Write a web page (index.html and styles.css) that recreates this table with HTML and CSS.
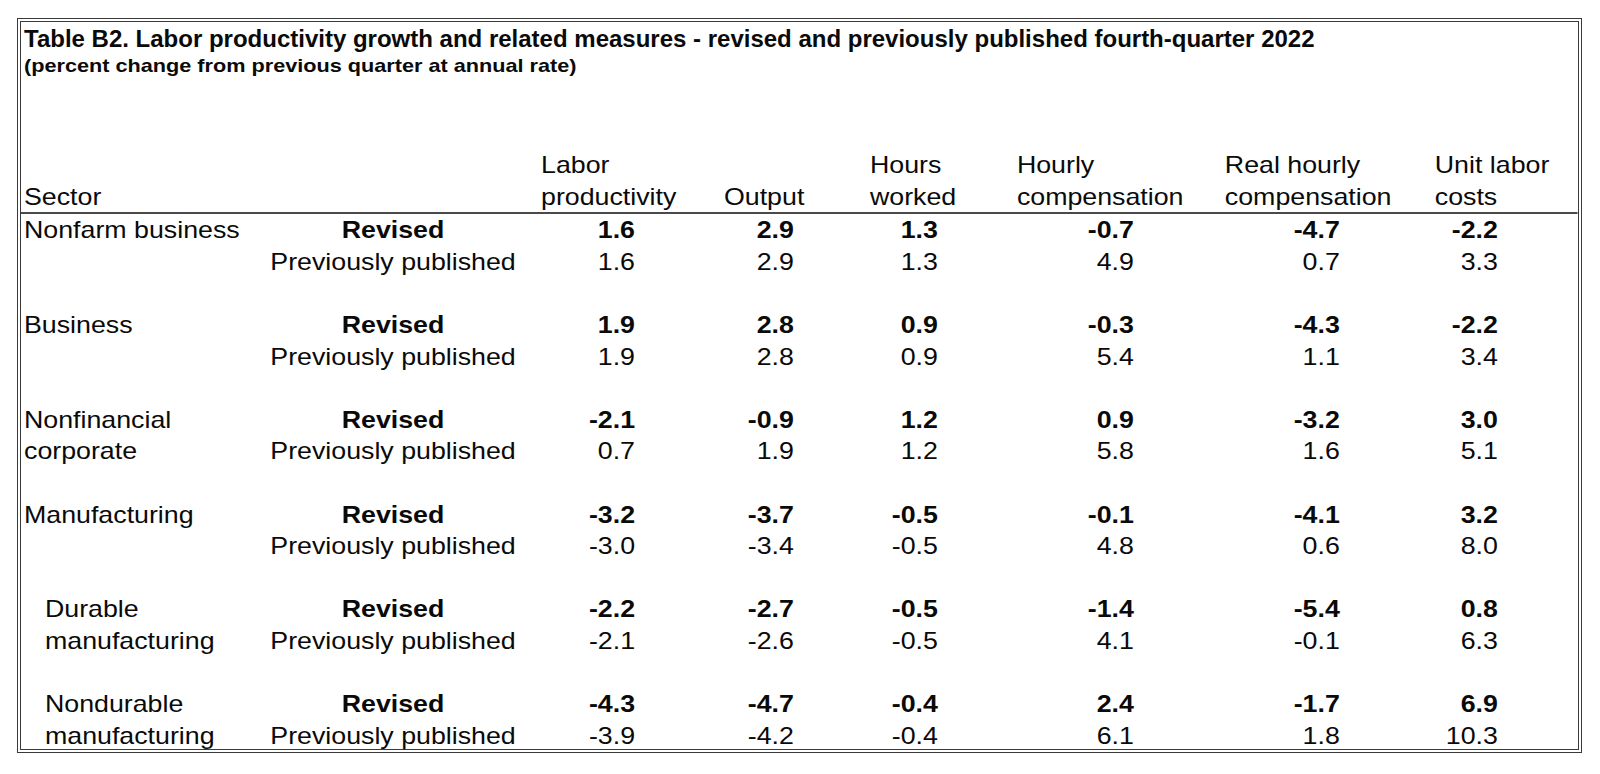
FILE: index.html
```html
<!DOCTYPE html>
<html lang="en">
<head>
<meta charset="utf-8">
<title>Table B2</title>
<link rel="stylesheet" href="styles.css">
</head>
<body>
<div class="frame">
  <div class="caption">
    <h1 class="title">Table B2. Labor productivity growth and related measures - revised and previously published fourth-quarter 2022</h1>
    <p class="subtitle"><span class="subtitle-text">(percent change from previous quarter at annual rate)</span></p>
  </div>
  <div class="sheet">
    <div class="row head">
      <div class="cell sector">Sector</div>
      <div class="cell kind"></div>
      <div class="cell h">Labor<br>productivity</div>
      <div class="cell h">Output</div>
      <div class="cell h">Hours<br>worked</div>
      <div class="cell h">Hourly<br>compensation</div>
      <div class="cell h">Real hourly<br>compensation</div>
      <div class="cell h">Unit labor<br>costs</div>
    </div>

    <div class="group">
      <div class="row rev">
        <div class="cell sector">Nonfarm business</div>
        <div class="cell kind">Revised</div>
        <div class="cell num">1.6</div><div class="cell num">2.9</div><div class="cell num">1.3</div><div class="cell num">-0.7</div><div class="cell num">-4.7</div><div class="cell num">-2.2</div>
      </div>
      <div class="row">
        <div class="cell sector"></div>
        <div class="cell kind">Previously published</div>
        <div class="cell num">1.6</div><div class="cell num">2.9</div><div class="cell num">1.3</div><div class="cell num">4.9</div><div class="cell num">0.7</div><div class="cell num">3.3</div>
      </div>
    </div>

    <div class="group">
      <div class="row rev">
        <div class="cell sector">Business</div>
        <div class="cell kind">Revised</div>
        <div class="cell num">1.9</div><div class="cell num">2.8</div><div class="cell num">0.9</div><div class="cell num">-0.3</div><div class="cell num">-4.3</div><div class="cell num">-2.2</div>
      </div>
      <div class="row">
        <div class="cell sector"></div>
        <div class="cell kind">Previously published</div>
        <div class="cell num">1.9</div><div class="cell num">2.8</div><div class="cell num">0.9</div><div class="cell num">5.4</div><div class="cell num">1.1</div><div class="cell num">3.4</div>
      </div>
    </div>

    <div class="group">
      <div class="row rev">
        <div class="cell sector">Nonfinancial</div>
        <div class="cell kind">Revised</div>
        <div class="cell num">-2.1</div><div class="cell num">-0.9</div><div class="cell num">1.2</div><div class="cell num">0.9</div><div class="cell num">-3.2</div><div class="cell num">3.0</div>
      </div>
      <div class="row">
        <div class="cell sector">corporate</div>
        <div class="cell kind">Previously published</div>
        <div class="cell num">0.7</div><div class="cell num">1.9</div><div class="cell num">1.2</div><div class="cell num">5.8</div><div class="cell num">1.6</div><div class="cell num">5.1</div>
      </div>
    </div>

    <div class="group">
      <div class="row rev">
        <div class="cell sector">Manufacturing</div>
        <div class="cell kind">Revised</div>
        <div class="cell num">-3.2</div><div class="cell num">-3.7</div><div class="cell num">-0.5</div><div class="cell num">-0.1</div><div class="cell num">-4.1</div><div class="cell num">3.2</div>
      </div>
      <div class="row">
        <div class="cell sector"></div>
        <div class="cell kind">Previously published</div>
        <div class="cell num">-3.0</div><div class="cell num">-3.4</div><div class="cell num">-0.5</div><div class="cell num">4.8</div><div class="cell num">0.6</div><div class="cell num">8.0</div>
      </div>
    </div>

    <div class="group">
      <div class="row rev">
        <div class="cell sector sub">Durable</div>
        <div class="cell kind">Revised</div>
        <div class="cell num">-2.2</div><div class="cell num">-2.7</div><div class="cell num">-0.5</div><div class="cell num">-1.4</div><div class="cell num">-5.4</div><div class="cell num">0.8</div>
      </div>
      <div class="row">
        <div class="cell sector sub">manufacturing</div>
        <div class="cell kind">Previously published</div>
        <div class="cell num">-2.1</div><div class="cell num">-2.6</div><div class="cell num">-0.5</div><div class="cell num">4.1</div><div class="cell num">-0.1</div><div class="cell num">6.3</div>
      </div>
    </div>

    <div class="group">
      <div class="row rev">
        <div class="cell sector sub">Nondurable</div>
        <div class="cell kind">Revised</div>
        <div class="cell num">-4.3</div><div class="cell num">-4.7</div><div class="cell num">-0.4</div><div class="cell num">2.4</div><div class="cell num">-1.7</div><div class="cell num">6.9</div>
      </div>
      <div class="row">
        <div class="cell sector sub">manufacturing</div>
        <div class="cell kind">Previously published</div>
        <div class="cell num">-3.9</div><div class="cell num">-4.2</div><div class="cell num">-0.4</div><div class="cell num">6.1</div><div class="cell num">1.8</div><div class="cell num">10.3</div>
      </div>
    </div>
  </div>
</div>
</body>
</html>
```

FILE: styles.css
```css
html, body {
  margin: 0;
  padding: 0;
  background: #ffffff;
}

body {
  font-family: "Liberation Sans", Arial, Helvetica, sans-serif;
  color: #0a0a0a;
}

.frame {
  margin: 18px 0 0 17px;
  width: 1565px;
  height: 735px;
  box-sizing: border-box;
  border: 4px double #3a3a3a;
  overflow: hidden;
}

.caption {
  padding-left: 3px;
}

.title {
  margin: 2.7px 0 0 0;
  font-size: 24px;
  line-height: 28px;
  font-weight: bold;
  white-space: nowrap;
}

.subtitle {
  margin: 3px 0 0 0;
  font-size: 19px;
  line-height: 20px;
  font-weight: bold;
  white-space: nowrap;
}

.subtitle-text {
  display: inline-block;
  transform: scaleX(1.14);
  transform-origin: 0 50%;
}

/* the table body is rendered horizontally stretched, as in the source image */
.sheet {
  width: 1396.3px;
  transform: scaleX(1.115);
  transform-origin: 0 0;
}

.row {
  display: grid;
  grid-template-columns: 200.9px 265.5px 164.1px 130.9px 131.8px 186.5px 188.3px 128.3px;
  font-size: 24px;
  line-height: 31.6px;
  height: 31.6px;
}

.head {
  margin-top: 73.4px;
  height: 63.2px;
  border-bottom: 2px solid #4a4a4a;
  align-items: end;
}

.group + .group {
  margin-top: 31.6px;
}

.cell {
  white-space: nowrap;
}

.sector {
  padding-left: 2.7px;
}

.sector.sub {
  padding-left: 21.5px;
}

.kind {
  text-align: center;
}

.rev .kind,
.rev .num {
  font-weight: bold;
}

.num {
  text-align: right;
}

.row > .num:nth-child(3) { padding-right: 79.8px; }
.row > .num:nth-child(4) { padding-right: 68.2px; }
.row > .num:nth-child(5) { padding-right: 70.9px; }
.row > .num:nth-child(6) { padding-right: 81.6px; }
.row > .num:nth-child(7) { padding-right: 85.2px; }
.row > .num:nth-child(8) { padding-right: 71.7px; }
```
